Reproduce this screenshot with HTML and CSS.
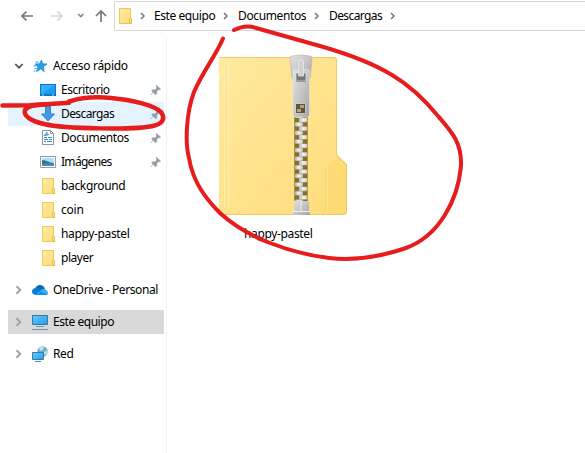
FILE: index.html
```html
<!DOCTYPE html>
<html lang="es">
<head>
<meta charset="utf-8">
<title>Descargas</title>
<link rel="stylesheet" href="styles.css">
</head>
<body>
<svg class="defs" aria-hidden="true">
  <defs>
    <linearGradient id="fold" x2="1" y2="1"><stop stop-color="#ffeaa0"/><stop offset="1" stop-color="#ffdc7a"/></linearGradient>
    <linearGradient id="screen" x2="1" y2="1"><stop stop-color="#65caff"/><stop offset="1" stop-color="#259df0"/></linearGradient>
    <linearGradient id="metal" x2="1" y2="1"><stop stop-color="#e2e2e2"/><stop offset=".5" stop-color="#c6c6c6"/><stop offset="1" stop-color="#a3a3a3"/></linearGradient>
    <linearGradient id="tooth" x2="1"><stop stop-color="#b8b8b8"/><stop offset=".5" stop-color="#f2f2f2"/><stop offset="1" stop-color="#cdcdcd"/></linearGradient>
    <pattern id="teeth" width="14" height="8.6" patternUnits="userSpaceOnUse" x="294" y="118">
      <rect width="14" height="8.6" fill="#85702b"/>
      <rect x="5" width="8.500" height="4" rx="1" fill="url(#tooth)"/>
      <rect x=".8" y="4.3" width="8" height="4" rx="1" fill="url(#tooth)"/>
    </pattern>
    <symbol id="folder" viewBox="0 0 13 16"><path d="M.5.5h11v9l1 1v5H.5z" fill="url(#fold)" stroke="#ebca57"/><path d="M10.500 15v-4.500l1-1 1 1v5h-2z" fill="#ffe58d" stroke="#e5bd3e"/></symbol>
    <symbol id="right" viewBox="0 0 6 8"><path d="m1 1 3 3-3 3" fill="none" stroke="currentColor" stroke-width="1.5"/></symbol>
    <symbol id="pin" viewBox="0 0 11 11"><path d="m6.500.500 4 3.500-1 .8-1-.2-2 2 .2 2.200-1 1-4-4 1-1 2.200.200 2-2-.5-1zM3.500 7l-3 3" fill="#929da6" stroke="#929da6" stroke-width=".7"/></symbol>
  </defs>
</svg>
<div class="window">
  <header class="toolbar">
    <div class="nav">
      <svg class="arrow back" viewBox="0 0 12 12"><path d="M12 6H1m4.500-4.500L1 6l4.500 4.500"/></svg>
      <svg class="arrow next" viewBox="0 0 12 12"><path d="M0 6h11M6.500 1.500 11 6l-4.500 4.500"/></svg>
      <svg class="recent" viewBox="0 0 8 6"><path d="m1.200 1 2.600 2.600L6.500 1"/></svg>
      <svg class="arrow up" viewBox="0 0 12 12"><path d="M6 12V1M1 6l5-5 5 5"/></svg>
    </div>
    <div class="address">
      <svg class="folder"><use href="#folder"/></svg>
      <svg class="sep"><use href="#right"/></svg>
      <span class="crumb este">Este equipo</span>
      <svg class="sep"><use href="#right"/></svg>
      <span class="crumb docs">Documentos</span>
      <svg class="sep"><use href="#right"/></svg>
      <span class="crumb desc">Descargas</span>
      <svg class="sep"><use href="#right"/></svg>
    </div>
  </header>
  <div class="body">
    <nav class="sidebar">
      <div class="row root"><svg class="toggle open" viewBox="0 0 8 10"><path d="m.300 3 3.700 3.700L7.700 3"/></svg>
        <svg class="icon" viewBox="0 0 16 16"><path d="m9.500 2 1.200 3.800 4.300.2-3.600 2.700.8 4.800-3.500-2.600-4.100 2.600 1.300-4.800L3 6l4.500-.2z" fill="#2e9de5" stroke="#1e8ad8" stroke-width=".8"/><path d="M3.500 4h3M1.500 8h3m-2 2.500h2m-3 2.500h2" stroke="#329fe8"/></svg>
        <span class="w75">Acceso rápido</span></div>
      <div class="row child"><svg class="icon" viewBox="0 0 16 16"><path d="M0 2h16v12H0z" fill="#0878cf"/><path d="M1 3h14v9H1z" fill="#34b0ff"/><path d="M1 12 15 3v9z" fill="#1d9cf0"/><path d="M2 13h2m8 0h2" stroke="#a7dcff"/></svg><span class="w49">Escritorio</span><svg class="pin"><use href="#pin"/></svg></div>
      <div class="row child hover"><svg class="icon" viewBox="0 0 16 16"><path d="M5.500.500h5V8h4L8 15 1.500 8h4z" fill="#4499e8" stroke="#2e84d5"/></svg><span class="w53">Descargas</span><svg class="pin"><use href="#pin"/></svg></div>
      <div class="row child"><svg class="icon" viewBox="0 0 16 16"><path d="M2.500.500h8l3 3v11h-11z" fill="#fff" stroke="#8b9299"/><path d="M10.500.500v3h3" fill="none" stroke="#8b9299"/><path d="M4 5.500h2m0-1h3m-5 3h3m1 0h4m-8 2h4m1 0h3m-8 2h2m1 0h5" stroke="#3288cc"/><path d="m4 6 3-4v4" fill="none" stroke="#4f9bd5"/></svg><span class="w68">Documentos</span><svg class="pin"><use href="#pin"/></svg></div>
      <div class="row child"><svg class="icon" viewBox="0 0 16 16"><path d="M.500 2.500h15v11H.500z" fill="#fff" stroke="#969da3"/><path d="M2 4h12v8H2z" fill="#b4def7"/><path d="M2 6c5 0 7 3 12 3v3H2z" fill="#347681"/><path d="M2 10c5-1 7 0 12-1v3H2z" fill="#488ac8"/></svg><span class="w51">Imágenes</span><svg class="pin"><use href="#pin"/></svg></div>
      <div class="row child"><svg class="folder"><use href="#folder"/></svg><span class="w64">background</span></div>
      <div class="row child"><svg class="folder"><use href="#folder"/></svg><span class="w23">coin</span></div>
      <div class="row child"><svg class="folder"><use href="#folder"/></svg><span class="w69">happy-pastel</span></div>
      <div class="row child"><svg class="folder"><use href="#folder"/></svg><span class="w32">player</span></div>
      <div class="row root gap"><svg class="toggle"><use href="#right"/></svg>
        <svg class="icon" viewBox="0 0 16 16"><path d="M3 6.500Q5 2.500 8.500 3 12 3.500 13 7l-4 4-5-2z" fill="#0868be"/><path d="M3.500 6Q6 5.500 9 8l-5 5Q0 12.500 0 9.500 0 6.500 3.500 6" fill="#087bd4"/><path d="M9 8q3-2.500 5 0 2 1 2 3t-3 2H4z" fill="#30b3f4"/><path d="m3 13 6-3.500 6.500 3Q14.500 13 13 13z" fill="#1492e4"/></svg>
        <span class="w105">OneDrive - Personal</span></div>
      <div class="row root gap selected"><svg class="toggle"><use href="#right"/></svg>
        <svg class="icon" viewBox="0 0 16 16"><path d="M.500 1.500h15v9H.500z" fill="url(#screen)" stroke="#367b9d"/><path d="M4 12.500h8M0 15.500h16" stroke="#7895a8"/></svg>
        <span class="w61">Este equipo</span></div>
      <div class="row root gap"><svg class="toggle"><use href="#right"/></svg>
        <svg class="icon" viewBox="0 0 16 16"><circle cx="10.500" cy="5.500" r="5.200" fill="#6fa9c8"/><path d="M7 2q3-2 5-1l-1 3-3 1zm5 4 3-2q1 3-2 5l-2-2z" fill="#c5e2e9"/><path d="M.500 6.500h11v7H.500z" fill="url(#screen)" stroke="#367b9d"/><path d="M3 15.500h6" stroke="#5791b5"/></svg>
        <span class="w20">Red</span></div>
    </nav>
    <main class="content">
      <figure class="file">
        <svg class="zip" viewBox="219 54 129 162">
          <path d="M219 57h115q3 0 3 3v95l10 9v47q0 4-4 4H219z" fill="url(#fold)"/>
          <path d="M219.500 57.500H334q2.500 0 2.500 3v95l10 9.500v46q0 3.500-4 3.500h-123" fill="none" stroke="#ebcb60"/>
          <path d="M336.500 155.500 327 165v46q0 3.500-3 3.500h19q3.500 0 3.500-3.500v-46z" fill="#ffdb76"/>
          <path d="m336.500 155.500-9.500 9.500v46q0 3-3 3" fill="none" stroke="#ffe9a4"/>
          <path d="m326 165.500v45q0 3-3 3" fill="none" stroke="#f2cf70" stroke-width=".8"/>
          <path d="m337 155.500 9.500 9.500v46q0 3.500-4 3.500h-18" fill="none" stroke="#e9c45c"/>
          <path d="M224.500 62v146m4-146v146" stroke="#fff0b8" stroke-width=".7"/><path d="M225.500 62v146" stroke="#f7df90" stroke-width=".7"/>
          <path d="M294 116h14v87h-14z" fill="url(#teeth)"/>
          <path d="M294.500 116v86m13-86v86" stroke="#b59b4d" stroke-width=".8"/>
          <path d="M294 201h6v-1h2v1h7v10h1v4h-17v-4h1z" fill="url(#metal)"/><path d="M301 201v10m-8 .500h17" stroke="#f0f0f0"/>
          <path d="M292 56q9-2 18 0 2 0 2 3l-2 20-2 1h-14l-2-2-2-19q0-3 2-3z" fill="url(#metal)" stroke="#aaa" stroke-width=".5"/>
          <path d="M296 73h10v8h-10z" fill="#777"/>
          <path fill-rule="evenodd" d="M294.500 69.500h13.500q1.500 0 1.500 3V115q0 2-2 2h-13q-1.500 0-1.500-2V72.500q0-3 1.500-3m1.500 3.500v8h10v-8zm0 31v9h9v-9z" fill="url(#metal)" stroke="#e4e4e4" stroke-width=".7"/>
          <path d="M296 104h9v9h-9z" fill="#635635"/><path d="M300 105h4v3h-4m-3 1h4v3h-4" fill="#aaa58f"/>
          <path d="M299.500 60h3q1 0 1 2v14h-5V62q0-2 1-2z" fill="#d1d1d1" stroke="#eee" stroke-width=".7"/><path d="M296 81.500h10" stroke="#999"/>
        </svg>
        <figcaption class="w69">happy-pastel</figcaption>
      </figure>
    </main>
  </div>
  <svg class="ink" viewBox="0 0 585 453">
    <path class="large" d="M223 38.500C215 57 203 71 194 92C186 113 185 143 189 158C193 183 207 200 220 213C247 238 290 253 329 258C355 261 383 256 406 248C439 236 458 200 461 166C462 143 452 132 438 116C424 99 409 85 392 75C374 64 348 54 320 46L256 28Q246 24 234 30"/>
    <path d="M2.500 105.500 30 105.200 69 102.800"/>
    <path d="M69 101.500C80 98 95 96.500 111 98C132 100 154 105 161 112C166 119 162 124 153 126C136 130 65 129 44 124C31 121 23 116 25 110Q28 105 45 104.500"/>
  </svg>
</div>
</body>
</html>
```
FILE: styles.css
```css
* { box-sizing: border-box; }
body { margin: 0; background: #fff; color: #000; font: 12px/24px "Noto Sans", "Open Sans", sans-serif; }
svg { display: block; flex: none; overflow: visible; }
.defs { position: absolute; width: 0; height: 0; }
.window { position: relative; width: 585px; height: 453px; overflow: hidden; }
.toolbar { display: flex; height: 31px; padding-top: 1px; }
.nav { display: flex; align-items: center; width: 114px; padding-left: 21px; }
.nav path, .toggle path { fill: none; stroke: currentColor; stroke-width: 1.7; }
.arrow { width: 12px; height: 12px; color: #777; }
.next { margin-left: 18px; color: #d5d5d5; }
.recent { width: 8px; height: 6px; margin-left: 14px; color: #888; }
.up { margin-left: 10px; color: #777; }
.address { display: flex; align-items: center; flex: 1; height: 30px; border: 1px solid #d9d9d9; border-right: 0; padding-left: 4px; }
.folder { width: 13px; height: 16px; }
.sep { width: 6px; height: 8px; color: #777; }
.address .folder + .sep { margin-left: 8px; }
.crumb { display: block; margin-left: 8px; margin-right: 8px; white-space: nowrap; }
.este { width: 61px; letter-spacing: -.43px; }
.docs { width: 68px; letter-spacing: -.37px; margin-left: 9px; }
.desc { width: 53px; letter-spacing: -.6px; margin-left: 9px; }
.body { display: flex; height: 422px; padding-top: 7px; }
.sidebar { width: 167px; padding: 16px 2px 0 8px; border-right: 1px solid #f2f2f2; }
.row { display: flex; align-items: center; height: 24px; white-space: nowrap; }
.root { padding-left: 7px; }
.root .icon { margin-left: 9px; }
.icon { width: 16px; height: 16px; }
.row span { margin-left: 5px; }
.toggle { width: 8px; height: 10px; color: #a0a0a0; }
.open { color: #505050; }
.child { padding: 0 3px 0 32px; }
.child .folder { margin: 0 1px 0 2px; }
.pin { width: 11px; height: 11px; margin-left: auto; }
.hover { background: #e5f3ff; }
.gap { margin-top: 8px; }
.selected { background: #d9d9d9; }
.w75 { width: 75px; letter-spacing: -.3px; }
.w49 { width: 49px; letter-spacing: -.45px; }
.w53 { width: 53px; letter-spacing: -.6px; }
.w68 { width: 68px; letter-spacing: -.4px; }
.w51 { width: 51px; letter-spacing: -.7px; }
.w64 { width: 64px; letter-spacing: -.35px; }
.w23 { width: 23px; letter-spacing: -.2px; }
.w69 { width: 69px; letter-spacing: -.35px; }
.w32 { width: 32px; letter-spacing: -.45px; }
.w105 { width: 105px; letter-spacing: -.4px; }
.w61 { width: 61px; letter-spacing: -.45px; }
.w20 { width: 20px; letter-spacing: -.4px; }
.content { flex: 1; padding: 16px 0 0 52px; }
.file { width: 129px; margin: 0; }
.zip { width: 129px; height: 162px; }
.file figcaption { margin: 6px 0 0 25px; white-space: nowrap; }
.ink { position: absolute; inset: 0; width: 585px; height: 453px; pointer-events: none; }
.ink path { fill: none; stroke: #e71c1d; stroke-width: 4.5; stroke-linecap: round; stroke-linejoin: round; }
.ink .large { stroke-width: 4; }
```
